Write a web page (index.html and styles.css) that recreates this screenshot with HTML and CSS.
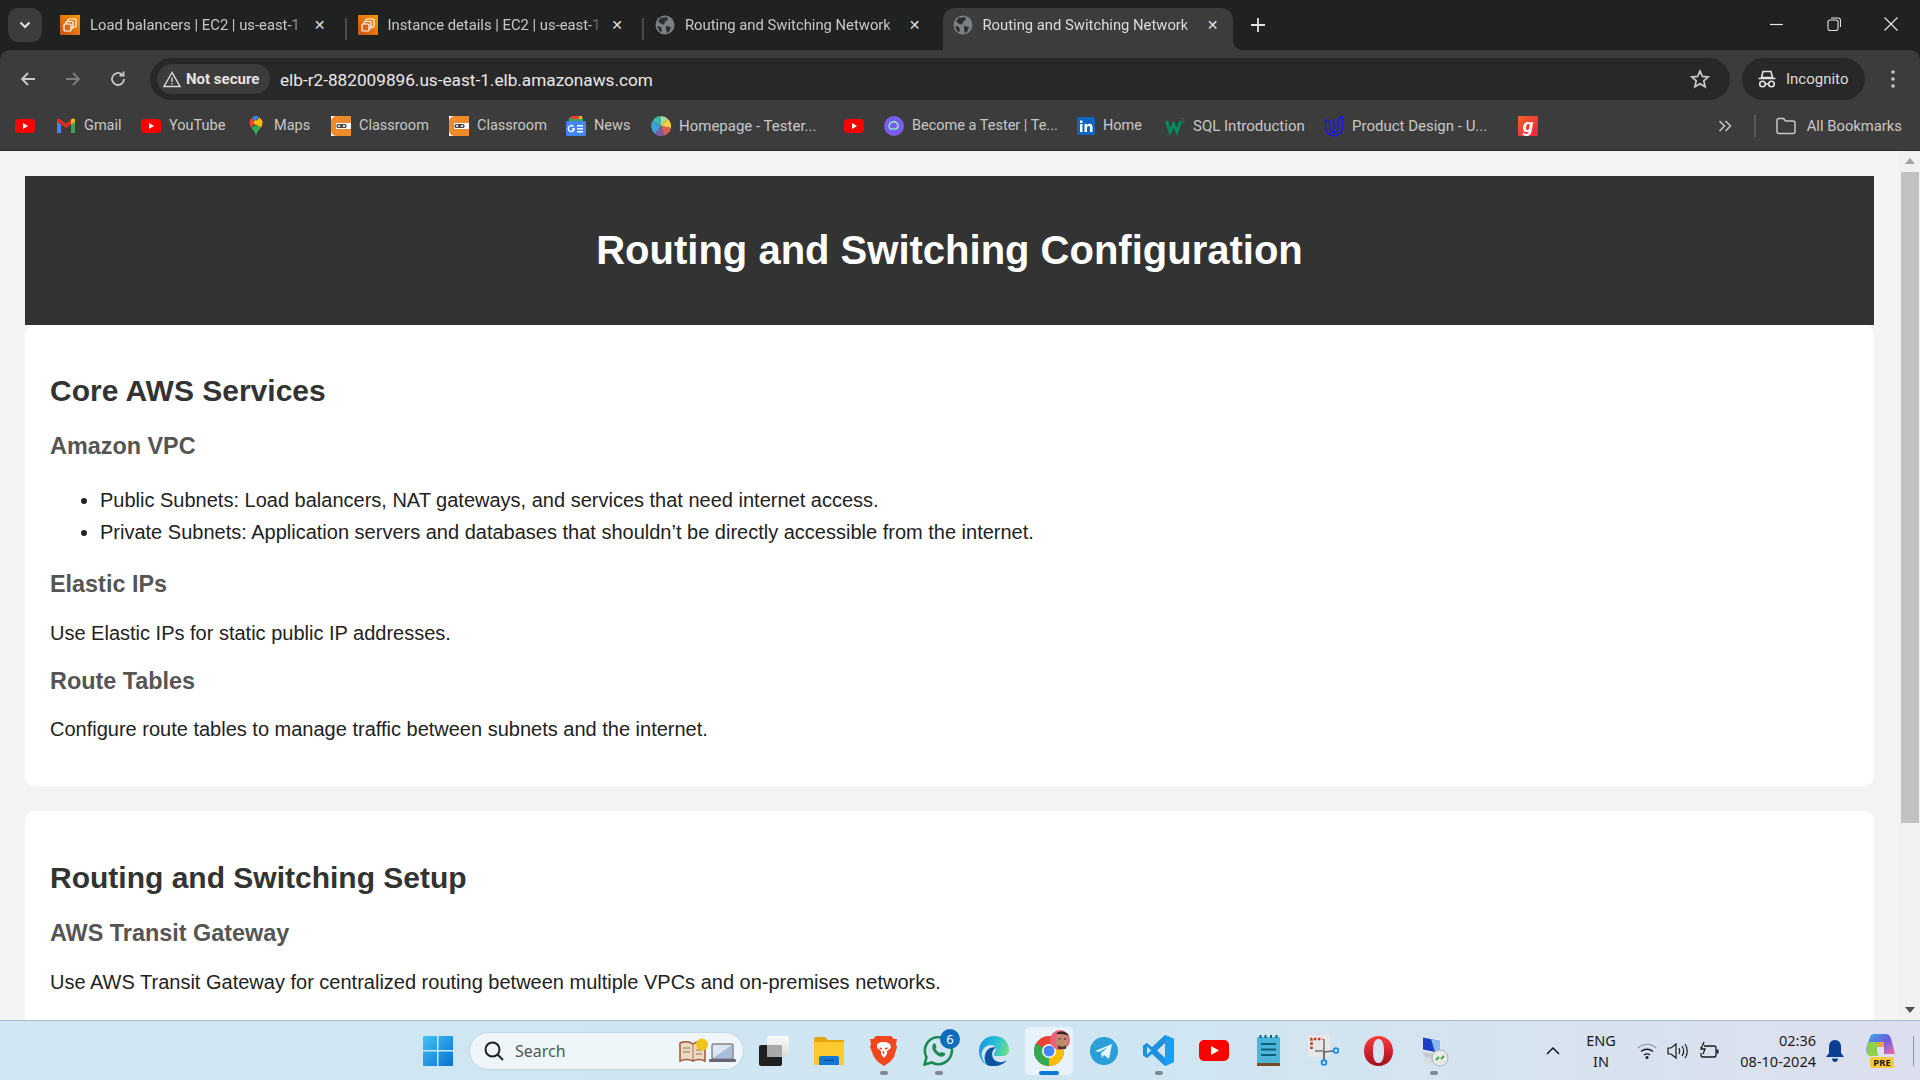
FILE: index.html
```html
<!DOCTYPE html>
<html lang="en">
<head>
  <meta charset="UTF-8" />
  <title>Routing and Switching Configuration</title>
  <link rel="stylesheet" href="styles.css">
</head>
<body>

<!-- shared icons -->
<svg class="defs" width="0" height="0">
  <symbol id="i-ec2" viewBox="0 0 20 20">
    <defs><linearGradient id="ec2g" x1="0" y1="1" x2="1" y2="0"><stop offset="0" stop-color="#c8511b"/><stop offset="1" stop-color="#f90"/></linearGradient></defs>
    <rect width="20" height="20" fill="url(#ec2g)"/>
    <rect x="8" y="4" width="8" height="8" rx="1" fill="none" stroke="#fff" stroke-width="1.2"/>
    <rect x="6" y="6.500" width="7" height="7" rx="1" fill="#d9701a" stroke="#fff" stroke-width="1.200"/>
    <rect x="4" y="9" width="7" height="7" rx="1" fill="#d9661a" stroke="#fff" stroke-width="1.200"/>
  </symbol>
  <symbol id="i-globe" viewBox="0 0 20 20">
    <circle cx="10" cy="10" r="9.500" fill="#7b7f82"/>
    <path d="M6 2.500c2 .5 4 0 6-.8l1 3-3 2-1 3-3-1-3-2.500zM11 11l5 1-2 5-2 1-1-4zM2 11l4 1 1 4-2 1z" fill="#2a2c2d"/>
  </symbol>
  <symbol id="i-yt" viewBox="0 0 20 20">
    <rect y="3" width="20" height="14" rx="4" fill="#f00"/>
    <path d="M8 7l5 3-5 3z" fill="#fff"/>
  </symbol>
  <symbol id="i-class" viewBox="0 0 20 20">
    <rect width="20" height="20" fill="#fff"/>
    <path d="M20 0H6C2.500 0 0 2.500 0 6v8c0 3.500 2.500 6 6 6h14v-3H7c-1 0-2-1-2-2V5c0-1 1-2 2-2h13z" fill="#ef8a28"/>
    <path d="M5 5c0-1 1-2 2-2h13v4H5zM5 13h15v4H7c-1 0-2-1-2-2z" fill="#ef8a28"/>
    <rect x="5" y="7" width="15" height="6" fill="#fff"/>
    <rect x="5.500" y="8" width="10" height="4" rx="1.500" fill="#4a4a4a"/>
    <circle cx="8" cy="10" r="1.100" fill="#fff"/><circle cx="13" cy="10" r="1.100" fill="#fff"/>
  </symbol>
</svg>

<div class="tabstrip">
  <button class="tab-search">
    <svg width="12" height="8" viewBox="0 0 12 8"><path d="M1.500 1.500L6 6l4.500-4.500" fill="none" stroke="#e3e3e3" stroke-width="2"/></svg>
  </button>
  <div class="tab">
    <svg class="fav" width="20" height="20"><use href="#i-ec2"/></svg>
    <span class="tab-title">Load balancers | EC2 | us-east-1</span>
    <span class="tab-x">&#x2715;</span>
  </div>
  <div class="tab">
    <svg class="fav" width="20" height="20"><use href="#i-ec2"/></svg>
    <span class="tab-title">Instance details | EC2 | us-east-1</span>
    <span class="tab-x">&#x2715;</span>
  </div>
  <div class="tab">
    <svg class="fav" width="20" height="20"><use href="#i-globe"/></svg>
    <span class="tab-title">Routing and Switching Network</span>
    <span class="tab-x">&#x2715;</span>
  </div>
  <div class="tab active">
    <svg class="fav" width="20" height="20"><use href="#i-globe"/></svg>
    <span class="tab-title">Routing and Switching Network</span>
    <span class="tab-x">&#x2715;</span>
  </div>
  <svg class="new-tab" width="16" height="16" viewBox="0 0 16 16"><path d="M8 1v14M1 8h14" stroke="#e3e3e3" stroke-width="1.800"/></svg>
  <div class="win-btns">
    <svg width="14" height="14" viewBox="0 0 14 14"><path d="M0 7.500h13" stroke="#e6e6e6" stroke-width="1.200"/></svg>
    <svg width="14" height="14" viewBox="0 0 14 14"><rect x="1" y="3" width="10" height="10.500" rx="2" fill="none" stroke="#e6e6e6" stroke-width="1.100"/><path d="M4 1h7c1.500 0 2.500 1 2.500 2.500V10" fill="none" stroke="#e6e6e6" stroke-width="1.100"/></svg>
    <svg width="14" height="14" viewBox="0 0 14 14"><path d="M.5.500l13 13M13.500.500l-13 13" stroke="#e6e6e6" stroke-width="1.200"/></svg>
  </div>
</div>

<div class="toolbar">
  <div class="nav">
    <svg width="18" height="18" viewBox="0 0 18 18"><path d="M16 9H3M9 3L3 9l6 6" fill="none" stroke="#c8c8c8" stroke-width="1.800"/></svg>
    <svg width="18" height="18" viewBox="0 0 18 18"><path d="M2 9h13M9 3l6 6-6 6" fill="none" stroke="#7d7d7d" stroke-width="1.800"/></svg>
    <svg width="18" height="18" viewBox="0 0 18 18"><path d="M15 9a6 6 0 1 1-2-4.500M14.500 1.500v4h-4" fill="none" stroke="#c8c8c8" stroke-width="1.800"/></svg>
  </div>
  <div class="omnibox">
    <div class="chip">
      <svg width="18" height="17" viewBox="0 0 18 17"><path d="M9 1.500L1 15.500h16z" fill="none" stroke="#d8d8d8" stroke-width="1.400"/><path d="M9 6.500v4.500M9 12v1.500" stroke="#d8d8d8" stroke-width="1.400"/></svg>
      <span>Not secure</span>
    </div>
    <span class="url">elb-r2-882009896.us-east-1.elb.amazonaws.com</span>
    <svg class="star" width="20" height="20" viewBox="0 0 20 20"><path d="M10 2l2.400 5.400 5.800.6-4.400 3.900 1.300 5.800L10 14.700l-5.100 3 1.300-5.800L1.800 8l5.800-.6z" fill="none" stroke="#c8c8c8" stroke-width="1.700"/></svg>
  </div>
  <div class="incognito">
    <svg width="20" height="20" viewBox="0 0 20 20"><path d="M6 2.500h8l1.500 6h-11zM1.500 9.500h17" fill="none" stroke="#e0e0e0" stroke-width="1.600"/><circle cx="5.500" cy="15" r="2.800" fill="none" stroke="#e0e0e0" stroke-width="1.600"/><circle cx="14.500" cy="15" r="2.800" fill="none" stroke="#e0e0e0" stroke-width="1.600"/><path d="M8.300 15h3.400" stroke="#e0e0e0" stroke-width="1.600"/></svg>
    <span>Incognito</span>
  </div>
  <svg class="kebab" width="6" height="20" viewBox="0 0 6 20"><circle cx="3" cy="3" r="1.800" fill="#c8c8c8"/><circle cx="3" cy="10" r="1.800" fill="#c8c8c8"/><circle cx="3" cy="17" r="1.800" fill="#c8c8c8"/></svg>
</div>

<div class="bookmarks">
  <a class="bm"><svg width="20" height="20"><use href="#i-yt"/></svg></a>
  <a class="bm">
    <svg width="20" height="20" viewBox="0 0 20 20"><path d="M1 17V5.500l4 3V17z" fill="#4285f4"/><path d="M15 17V8.500l4-3V17z" fill="#34a853"/><path d="M1 6V4c0-1.500 1.500-2 2.500-1.300L10 7.500l6.500-4.800L15 8.500 10 12 5 8.500z" fill="#d93025"/><path d="M15 8.500V3.500l1.500-.8C17.500 2 19 2.500 19 4v2z" fill="#fbbc04"/></svg>
    Gmail
  </a>
  <a class="bm"><svg width="20" height="20"><use href="#i-yt"/></svg> YouTube</a>
  <a class="bm">
    <svg width="20" height="20" viewBox="0 0 20 20"><path d="M5 11.500c2 2.500 4 4.500 5 8.500 1-4 3-6 5-8.500L10 9z" fill="#34a853"/><path d="M16.500 6.500c0 2-.7 3.500-1.500 5L9 8l4-6.500c2 1 3.500 2.700 3.500 5z" fill="#fbbc04"/><path d="M10 0c1 0 2 .3 3 .8L9.500 5 6 2 7 .8C8 .3 9 0 10 0z" fill="#4285f4"/><path d="M3.500 6.500C3.500 4.500 4.500 3 6 2l4 4.500L5 11.500C4 10 3.500 8.500 3.500 6.500z" fill="#ea4335"/><circle cx="10" cy="6.500" r="2.300" fill="#fbbc04"/></svg>
    Maps
  </a>
  <a class="bm"><svg width="20" height="20"><use href="#i-class"/></svg> Classroom</a>
  <a class="bm"><svg width="20" height="20"><use href="#i-class"/></svg> Classroom</a>
  <a class="bm">
    <svg width="20" height="20" viewBox="0 0 20 20"><path d="M3 1.500h14V6H3z" fill="#34a853"/><path d="M5 0h9v3H5z" fill="#ea4335"/><path d="M13 0h3v3h-3z" fill="#fbbc04"/><rect y="5" width="20" height="15" rx="1.500" fill="#4285f4"/><path d="M7.500 10.500a3 3 0 1 0 .8 2.500H6" fill="none" stroke="#fff" stroke-width="1.400"/><path d="M11 9h6v1.500h-6zM11 12h6v1.500h-6zM11 15h6v1.500h-6z" fill="#fff"/></svg>
    News
  </a>
  <a class="bm wide">
    <svg width="20" height="20" viewBox="0 0 20 20"><path d="M10 10V0a10 10 0 0 0-8.500 5z" fill="#3bb6a8"/><path d="M10 10V0a10 10 0 0 1 7 3z" fill="#a8d8a0"/><path d="M10 10l7-7a10 10 0 0 1 3 9z" fill="#f7d23e"/><path d="M10 10l10 2a10 10 0 0 1-7 7.500z" fill="#d9604f"/><path d="M10 10l3 9.500a10 10 0 0 1-9-1.500z" fill="#7d5aa8"/><path d="M10 10l-6 8a10 10 0 0 1-2.500-13z" fill="#3f9ed0"/></svg>
    Homepage - Tester...
  </a>
  <a class="bm"><svg width="20" height="20"><use href="#i-yt"/></svg></a>
  <a class="bm">
    <svg width="20" height="20" viewBox="0 0 20 20"><circle cx="10" cy="10" r="10" fill="#7b5cf0"/><path d="M6 13a4.500 4.500 0 1 1 8-2.500c0 1.500-1 2.500-3 2.500H6" fill="none" stroke="#7fe8c8" stroke-width="1.600"/></svg>
    Become a Tester | Te...
  </a>
  <a class="bm">
    <svg width="18" height="20" viewBox="0 0 18 20"><rect y="1" width="18" height="18" rx="1.500" fill="#0a66c2"/><path d="M3 8h2.500v8H3zM3 4.500h2.500V7H3zM7.500 8H10v1.200c.5-.8 1.500-1.400 2.700-1.400 2 0 2.800 1.300 2.800 3.400V16H13v-4.300c0-1-.3-1.700-1.300-1.700s-1.700.8-1.700 1.900V16H7.500z" fill="#fff"/></svg>
    Home
  </a>
  <a class="bm wide">
    <svg width="20" height="20" viewBox="0 0 20 20"><path d="M1.500 5l3.500 11 3.500-8 3.500 8L15.500 5" fill="none" stroke="#04895f" stroke-width="3"/><text x="16" y="7" class="sup">3</text></svg>
    SQL Introduction
  </a>
  <a class="bm wide">
    <svg width="20" height="22" viewBox="0 0 20 22"><path d="M1.500 4.500L6 7v7c0 2 1.500 3.500 4 4 2.500-.5 4-2 4-4V4l4.500-2.500V13c0 4-3.500 7-8.500 8-5-1-8.500-4-8.500-8z" fill="none" stroke="#1a1ae6" stroke-width="1.500"/><path d="M10 4v14" stroke="#1a1ae6" stroke-width="1.500"/></svg>
    Product Design - U...
  </a>
  <a class="bm bm-g">g</a>
  <svg class="more" width="14" height="12" viewBox="0 0 14 12"><path d="M1.500 1l5 5-5 5M7.500 1l5 5-5 5" fill="none" stroke="#c8c8c8" stroke-width="1.500"/></svg>
  <span class="bm-sep"></span>
  <a class="bm all">
    <svg width="20" height="18" viewBox="0 0 20 18"><path d="M1 3.500C1 2 2 1.500 3 1.500h4.500l2 2.500H17c1 0 2 .5 2 2v8.500c0 1.500-1 2-2 2H3c-1 0-2-.5-2-2z" fill="none" stroke="#c8c8c8" stroke-width="1.500"/></svg>
    All Bookmarks
  </a>
</div>

<div class="viewport">
  <div class="page">
    <header class="site-head">
      <h1>Routing and Switching Configuration</h1>
    </header>
    <section class="card">
      <h2>Core AWS Services</h2>
      <h3>Amazon VPC</h3>
      <ul>
        <li>Public Subnets: Load balancers, NAT gateways, and services that need internet access.</li>
        <li>Private Subnets: Application servers and databases that shouldn’t be directly accessible from the internet.</li>
      </ul>
      <h3>Elastic IPs</h3>
      <p>Use Elastic IPs for static public IP addresses.</p>
      <h3>Route Tables</h3>
      <p>Configure route tables to manage traffic between subnets and the internet.</p>
    </section>
    <section class="card">
      <h2>Routing and Switching Setup</h2>
      <h3>AWS Transit Gateway</h3>
      <p>Use AWS Transit Gateway for centralized routing between multiple VPCs and on-premises networks.</p>
    </section>
  </div>
  <div class="scrollbar">
    <span class="arrow up"></span>
    <div class="track"><div class="thumb"></div></div>
    <span class="arrow down"></span>
  </div>
</div>

<div class="taskbar">
  <div class="slot start">
    <svg width="30" height="30" viewBox="0 0 30 30"><defs><linearGradient id="wing" x1="0" y1="0" x2="1" y2="1"><stop offset="0" stop-color="#3fc4f5"/><stop offset="1" stop-color="#0b6fd0"/></linearGradient></defs><path d="M1 0h13v14H0V1q0-1 1-1zM15.500 0H29q1 0 1 1v13H15.500zM0 15.500h14V30H1q-1 0-1-1zM15.500 15.500H30V29q0 1-1 1H15.500z" fill="url(#wing)"/></svg>
  </div>
  <div class="search">
    <svg width="22" height="22" viewBox="0 0 22 22"><circle cx="9.500" cy="9.500" r="7" fill="none" stroke="#222" stroke-width="2"/><path d="M14.500 14.500L20 20" stroke="#222" stroke-width="2"/></svg>
    <span>Search</span>
    <svg class="search-art" width="58" height="26" viewBox="0 0 58 26"><path d="M1 5c5-2 9-2 13 1 4-3 8-3 12-1v18c-4-2-8-2-12 0-4-2-8-2-13 0z" fill="#e8d9c0" stroke="#a0563a" stroke-width="1.500"/><path d="M14 6v17M4 10h7M4 14h7M17 12h6M17 16h6" stroke="#a0563a" stroke-width=".8"/><circle cx="23" cy="6.500" r="6" fill="#f0c419"/><rect x="33" y="6" width="21" height="15" rx="1" fill="#dce6f4" stroke="#555"/><path d="M34 20l19-13v13z" fill="#a9bcd8"/><rect x="30" y="21" width="27" height="3" rx="1" fill="#667"/></svg>
  </div>
  <div class="slot">
    <svg width="30" height="30" viewBox="0 0 30 30"><defs><linearGradient id="tv" x1="0" y1="0" x2="0" y2="1"><stop offset="0" stop-color="#fafafa"/><stop offset="1" stop-color="#dcdcdc"/></linearGradient></defs><rect x="0" y="9" width="23" height="21" rx="2" fill="#1f1f1f"/><rect x="8" y="0" width="22" height="21" rx="2" fill="url(#tv)"/><rect x="8" y="9" width="15" height="12" rx="1" fill="#a8a8a8"/></svg>
  </div>
  <div class="slot">
    <svg width="30" height="28" viewBox="0 0 30 28"><path d="M0 2q0-2 2-2h9l3 3h16v5H0z" fill="#e5a50e"/><path d="M0 5h30v23H0z" fill="#fdc92f"/><path d="M5 21q0-2 2-2h16q2 0 2 2v7H5z" fill="#0f78d4"/><rect x="10" y="22.500" width="10" height="1.500" fill="#0a4f90"/></svg>
  </div>
  <div class="slot dot">
    <svg width="27" height="30" viewBox="0 0 27 30"><path d="M6 0h15l3 3 3 0-1 5 1 3-3 10-4 5-6 4-6-4-4-5L0 11l1-3L0 3l3 0z" fill="#f1471d"/><path d="M7 8l4-2h5l4 2 1 4-4 3v3l-3 4-3-4v-3l-4-3z" fill="#fff"/><path d="M9.500 12l2.500 1M17.500 12l-2.500 1M13.500 15v3" stroke="#f1471d" stroke-width="1.400"/></svg>
  </div>
  <div class="slot dot">
    <svg width="31" height="30" viewBox="0 0 31 30"><path d="M1.500 28.500l2-7.500A13.500 13.500 0 1 1 9 26.500z" fill="none" stroke="#1e8a55" stroke-width="2.600"/><path d="M10 8c1-1 2-1 2.500 0l1 3-1 1.500c1 2 2.500 3.500 4.500 4.500l1.500-1 3 1c1 .5 1 1.500 0 2.500-2 2-5 1.500-8-1s-5-6-4-9z" fill="#1e8a55"/></svg>
    <span class="badge">6</span>
  </div>
  <div class="slot">
    <svg width="30" height="30" viewBox="0 0 30 30"><defs><linearGradient id="edge1" x1="0" y1=".2" x2="1" y2=".5"><stop offset="0" stop-color="#1598e0"/><stop offset=".55" stop-color="#2cc0d8"/><stop offset="1" stop-color="#6fe37c"/></linearGradient></defs><path d="M15 0c9 0 15 6 15 14 0 4-3 6-7 6H15c0-5 3-6 2-8-1-3-6-4-9-2-4 2-6 6-5 11 1 4 3 6 5 8C3 27 0 21 0 15 0 6 7 0 15 0z" fill="url(#edge1)"/><path d="M8 29c-4-5-3-14 3-17 3-1 6-1 6 0-3 1-5 5-3 10 2 4 8 6 14 2-3 4-8 6-13 6-3 0-5 0-7-1z" fill="#0c56a0"/></svg>
  </div>
  <div class="slot active-app">
    <svg width="30" height="30" viewBox="0 0 30 30"><circle cx="15" cy="15" r="15" fill="#ea4335"/><path d="M15 15L2 7.500A15 15 0 0 0 15 30z" fill="#34a853"/><path d="M15 15V30A15 15 0 0 0 28 7.500z" fill="#fbbc04"/><circle cx="15" cy="15" r="7" fill="#fff"/><circle cx="15" cy="15" r="5.500" fill="#4285f4"/></svg>
    <svg class="avatar" width="20" height="20" viewBox="0 0 20 20"><circle cx="10" cy="10" r="10" fill="#e8607a"/><ellipse cx="12" cy="11" rx="6" ry="8" fill="#c08a6c"/><path d="M6 4c3-4 11-3 13 2-3-2-9-2-13-2z" fill="#2e2320"/><path d="M8 15c2 2 6 2 8 0v4H8z" fill="#4a3a35"/><path d="M8.500 9h2M14 9h2" stroke="#2e2320" stroke-width="1.200"/></svg>
  </div>
  <div class="slot">
    <svg width="28" height="28" viewBox="0 0 28 28"><circle cx="14" cy="14" r="14" fill="#2a9fd8"/><path d="M5 14l17-7-3 15-5-4-2 3-1-5 7-6-9 5z" fill="#e8f5fb"/></svg>
  </div>
  <div class="slot dot">
    <svg width="31" height="31" viewBox="0 0 31 31"><path d="M22 0l9 4v23l-9 4L9 19l-5 4-4-2.500v-10L4 8l5 4z" fill="#1f8fe0"/><path d="M22 0l9 4v23l-9 4z" fill="#15a0f5"/><path d="M22 8l-8 7.500 8 7.500z" fill="#cfe6f2"/><path d="M4 11.500v8l4-4z" fill="#cfe6f2"/></svg>
  </div>
  <div class="slot">
    <svg width="30" height="21" viewBox="0 0 30 21"><rect width="30" height="21" rx="5" fill="#f00"/><path d="M12 6l8 4.500-8 4.500z" fill="#fff"/></svg>
  </div>
  <div class="slot">
    <svg width="23" height="31" viewBox="0 0 23 31"><rect y="2" width="23" height="26" rx="1" fill="#4db6d8"/><path d="M0 28h23v3H0z" fill="#7a4a2a"/><path d="M3.500 0v3M8.500 0v3M14 0v3M19.500 0v3" stroke="#0d5e7e" stroke-width="2"/><path d="M4 9h15M4 14.500h15M4 20h15" stroke="#0d5e7e" stroke-width="2"/></svg>
  </div>
  <div class="slot">
    <svg width="31" height="31" viewBox="0 0 31 31"><rect width="22" height="22" rx="2" fill="#e8e8e8"/><path d="M3.500 14V4h11" fill="none" stroke="#c83a20" stroke-width="2.600" stroke-dasharray="2.600 1.500"/><path d="M16 4v19M16 16l-9 0" stroke="#777" stroke-width="1.600"/><path d="M16 17L25 16M16 17v8" stroke="#666" stroke-width="1.600"/><circle cx="16" cy="27.500" r="2.400" fill="none" stroke="#1b8be0" stroke-width="1.800"/><circle cx="28" cy="15.500" r="2.400" fill="none" stroke="#1b8be0" stroke-width="1.800"/></svg>
  </div>
  <div class="slot">
    <svg width="29" height="30" viewBox="0 0 29 30"><defs><linearGradient id="op" x1="0" y1="0" x2="0" y2="1"><stop offset="0" stop-color="#ff3b3b"/><stop offset="1" stop-color="#a30f1f"/></linearGradient></defs><path fill-rule="evenodd" d="M14.500 0C23 0 29 6.500 29 15s-6 15-14.500 15S0 23.500 0 15 6 0 14.500 0zM14.500 3C10 3 9 9 9 15s1 12 5.500 12S20 21 20 15 19 3 14.500 3z" fill="url(#op)"/></svg>
  </div>
  <div class="slot dot">
    <svg width="30" height="32" viewBox="0 0 30 32"><path d="M2 0l21 4v16L2 16z" fill="#dfe4ea"/><path d="M4 2.500l17 3.500v12L4 14.500z" fill="#1c3fc8"/><path d="M12 4l9 2v12l-5-1z" fill="#8ab8f0"/><path d="M3 17l16 3v4l-13-2z" fill="#c4cad2"/><ellipse cx="10" cy="26" rx="6" ry="3" fill="#d8dde2"/><circle cx="21" cy="23" r="8" fill="#e8e8e8" stroke="#9aa" stroke-width=".8"/><path d="M17 25l3-3M25 21l-3 3" stroke="#3aa53a" stroke-width="1.800"/></svg>
  </div>

  <div class="tray">
    <svg class="caret" width="14" height="8" viewBox="0 0 14 8"><path d="M1 7l6-6 6 6" fill="none" stroke="#1a1a1a" stroke-width="1.500"/></svg>
    <div class="lang"><span>ENG</span><span>IN</span></div>
    <div class="sys">
      <svg width="20" height="18" viewBox="0 0 20 18"><path d="M1 6c5-5 13-5 18 0" fill="none" stroke="#8a9298" stroke-width="1.200"/><path d="M4 9.500c3.500-3 8.500-3 12 0M7 13c1.500-1.500 4.500-1.500 6 0" fill="none" stroke="#1a1a1a" stroke-width="1.300"/><circle cx="10" cy="15.500" r="1.500" fill="#1a1a1a"/></svg>
      <svg width="21" height="18" viewBox="0 0 21 18"><path d="M1 6h3l5-4v14l-5-4H1z" fill="none" stroke="#1a1a1a" stroke-width="1.200"/><path d="M12 6c1 2 1 4 0 6M15 4c2 3 2 7 0 10M18 2c3 4 3 10 0 14" fill="none" stroke="#1a1a1a" stroke-width="1.200"/></svg>
      <svg width="22" height="20" viewBox="0 0 22 20"><path d="M6 5h10q2 0 2 2v7q0 2-2 2H5q-2 0-2-2v-2M3 7V6" fill="none" stroke="#1a1a1a" stroke-width="1.300"/><rect x="18.500" y="8.500" width="2" height="4" fill="#1a1a1a"/><path d="M6 1L3 8h4l-2 5" fill="none" stroke="#1a1a1a" stroke-width="1.300"/></svg>
    </div>
    <div class="clock"><span>02:36</span><span>08-10-2024</span></div>
    <svg class="bell" width="18" height="22" viewBox="0 0 18 22"><path d="M9 0c4 0 6 3 6 7v6l3 4H0l3-4V7c0-4 2-7 6-7z" fill="#0b3d91"/><path d="M6 18.500h6c0 2-1.500 3.500-3 3.500s-3-1.500-3-3.500z" fill="#0b3d91"/></svg>
    <div class="copilot">
      <svg width="29" height="25" viewBox="0 0 29 25"><defs><linearGradient id="cop" x1="0" y1="0" x2="1" y2="1"><stop offset="0" stop-color="#2fb6e8"/><stop offset=".5" stop-color="#6c5ce0"/><stop offset="1" stop-color="#f06fa8"/></linearGradient></defs><path d="M8 0h12c3 0 5 3 6 8l3 12H18V8H11v12H3C0 20 0 16 1 12L4 3c.5-2 2-3 4-3z" fill="url(#cop)"/><path d="M3 8c-3 5-3 14 1 14h9c-2-1-2-6-2-9V8z" fill="#8ed04c"/><path d="M11 8h7v5h-7z" fill="#f0a040"/></svg>
      <span class="pre">PRE</span>
    </div>
    <span class="tray-sep"></span>
  </div>
</div>

</body>
</html>
```

FILE: styles.css
```css
* { box-sizing: border-box; margin: 0; padding: 0; }
html, body { height: 100%; }
body {
  width: 1920px;
  height: 1080px;
  overflow: hidden;
  display: flex;
  flex-direction: column;
  background: #202221;
  font-family: Roboto, "Liberation Sans", sans-serif;
}
.defs { position: absolute; }

/* tab strip */
.tabstrip {
  height: 50px;
  display: flex;
  align-items: flex-end;
  padding-left: 8px;
  background: #202221;
  flex: none;
}
.tab-search {
  width: 34px;
  height: 34px;
  margin-bottom: 8px;
  margin-right: 9px;
  border: 0;
  border-radius: 10px;
  background: #3c3c3c;
  display: flex;
  align-items: center;
  justify-content: center;
}
.tab {
  position: relative;
  width: 297.500px;
  height: 42px;
  display: flex;
  align-items: center;
  padding: 0 19px 8px 9px;
  color: #c8c8c8;
  font-size: 14.800px;
}
.tab + .tab::before {
  content: "";
  position: absolute;
  left: -4px;
  top: 10px;
  height: 22px;
  width: 2px;
  background: #4a4a4a;
}
.tab.active::before { display: none; }
.fav { flex: none; margin-right: 10px; }
.tab-title {
  flex: none;
  width: 214px;
  white-space: nowrap;
  overflow: hidden;
  -webkit-mask-image: linear-gradient(to right, #000 94%, transparent);
  mask-image: linear-gradient(to right, #000 94%, transparent);
}
.tab-x {
  flex: none;
  width: 20px;
  margin-left: auto;
  font-size: 14px;
  color: #e0e0e0;
  text-align: center;
  font-family: "DejaVu Sans", sans-serif;
}
.tab.active {
  width: 290px;
  margin-left: -1px;
  padding-left: 10px;
  padding-right: 10px;
  background: #3c3c3c;
  border-radius: 12px 12px 0 0;
  color: #dcdcdc;
}
.tab.active::after {
  content: "";
  position: absolute;
  right: -10px;
  bottom: 0;
  width: 10px;
  height: 10px;
  background: radial-gradient(circle at 100% 0, transparent 10px, #3c3c3c 10.500px);
}
.new-tab { margin: 0 0 17px 17px; }
.win-btns {
  margin-left: auto;
  display: flex;
  gap: 43px;
  padding-right: 22px;
  height: 50px;
  align-items: center;
  padding-bottom: 2px;
}

/* toolbar */
.toolbar {
  height: 50px;
  flex: none;
  display: flex;
  align-items: flex-end;
  background: #3c3c3c;
  border-radius: 10px 10px 0 0;
}
.nav {
  width: 150px;
  height: 42px;
  display: flex;
  align-items: center;
  padding-left: 19px;
  gap: 27px;
}
.omnibox {
  width: 1580px;
  height: 42px;
  background: #282828;
  border-radius: 21px;
  display: flex;
  align-items: center;
  padding-left: 7px;
  padding-right: 20px;
}
.chip {
  width: 113px;
  height: 30px;
  border-radius: 15px;
  background: #3c3c3c;
  display: flex;
  align-items: center;
  gap: 5px;
  padding-left: 6px;
  color: #e3e3e3;
  font-size: 15px;
  font-weight: 700;
  white-space: nowrap;
}
.url {
  margin: 2px 0 0 10px;
  color: #e8e8e8;
  font-size: 17.200px;
}
.star { margin-left: auto; }
.incognito {
  width: 123px;
  height: 42px;
  margin-left: 12px;
  background: #282828;
  border-radius: 21px;
  display: flex;
  align-items: center;
  gap: 9px;
  padding-left: 15px;
  color: #dcdcdc;
  font-size: 15px;
}
.kebab { margin: 0 0 11px 25px; }

/* bookmarks */
.bookmarks {
  height: 51px;
  flex: none;
  display: flex;
  align-items: center;
  padding: 1px 18px 0 15px;
  background: #3c3c3c;
  border-bottom: 1px solid #2a2a2a;
  color: #c8c8c8;
  font-size: 14.500px;
  line-height: 22px;
}
.bm {
  flex: none;
  display: flex;
  align-items: center;
  gap: 8px;
  white-space: nowrap;
}
.wide { font-size: 15px; }
.all { gap: 11px; font-size: 14.800px; }
.bm:nth-child(1) { width: 41px; }
.bm:nth-child(2) { width: 85px; }
.bm:nth-child(3) { width: 105px; }
.bm:nth-child(4) { width: 85px; }
.bm:nth-child(5) { width: 118px; }
.bm:nth-child(6) { width: 117px; }
.bm:nth-child(7) { width: 85px; }
.bm:nth-child(8) { width: 193px; }
.bm:nth-child(9) { width: 40px; }
.bm:nth-child(10) { width: 193px; }
.bm:nth-child(11) { width: 88px; }
.bm:nth-child(12) { width: 159px; }
.bm:nth-child(13) { width: 194px; }
.bm-g {
  width: 20px;
  height: 20px;
  background: linear-gradient(135deg, #f0641e, #e81e50);
  color: #fff;
  font-size: 19px;
  font-weight: 700;
  font-style: italic;
  justify-content: center;
  line-height: 1;
}
.sup { font-size: 7px; fill: #04895f; font-family: "Liberation Sans", sans-serif; }
.more { margin-left: auto; }
.bm-sep {
  width: 2px;
  height: 22px;
  margin: 0 20px 0 22px;
  background: #5a5a5a;
}

/* page */
.viewport {
  flex: 1;
  min-height: 0;
  display: flex;
  background: #f4f4f4;
}
.page {
  flex: 1;
  min-width: 0;
  overflow: hidden;
  padding: 25px 25px 0 25px;
  color: #222;
  font-family: "Liberation Sans", Arial, sans-serif;
  font-size: 20px;
  line-height: 32px;
}
.site-head {
  height: 149px;
  padding-bottom: 2px;
  display: flex;
  align-items: center;
  justify-content: center;
  background: #333;
  color: #fff;
}
h1 { font-size: 40px; line-height: 64px; }
.card {
  background: #fff;
  border-radius: 10px;
  padding: 42px 25px 41px;
  margin-bottom: 25px;
}
.card + .card { padding-top: 43px; }
h2 { font-size: 30px; line-height: 48px; color: #333; margin-bottom: 13px; }
h3 { font-size: 23.400px; line-height: 37px; color: #555; margin-bottom: 13.500px; }
ul { padding-left: 50px; margin-bottom: 18px; margin-top: 19px; }
p + h3 { margin-top: 14px; }

.scrollbar {
  width: 21px;
  flex: none;
  display: flex;
  flex-direction: column;
  background: #f1f1f1;
}
.track { flex: 1; padding: 0 1px 0 2px; }
.thumb { height: 651px; margin-top: 1px; background: #c1c1c1; }
.arrow { height: 20px; display: flex; align-items: center; justify-content: center; }
.arrow::before {
  content: "";
  border-left: 5px solid transparent;
  border-right: 5px solid transparent;
}
.up::before { border-bottom: 6px solid #a3a3a3; }
.down::before { border-top: 6px solid #505050; }

/* taskbar */
.taskbar {
  height: 60px;
  flex: none;
  display: flex;
  align-items: center;
  padding-left: 410px;
  background: linear-gradient(90deg, #cfe7f3 0%, #cfe6f2 60%, #d8e2ef 85%, #dcdfee 100%);
  border-top: 1px solid #a9bccb;
  font-family: "Noto Sans", sans-serif;
  color: #1a1a1a;
}
.slot {
  position: relative;
  width: 55px;
  height: 50px;
  flex: none;
  display: flex;
  align-items: center;
  justify-content: center;
}
.start { margin-right: 4px; }
.search {
  width: 275px;
  height: 38px;
  margin-right: 2px;
  flex: none;
  display: flex;
  align-items: center;
  padding: 0 6px 0 13px;
  gap: 10px;
  background: #eff6fa;
  border: 1px solid #c4d6e0;
  border-radius: 19px;
  color: #555;
  font-size: 16px;
}
.search-art { margin-left: auto; }
.dot::after {
  content: "";
  position: absolute;
  bottom: 1px;
  left: 50%;
  width: 8px;
  height: 4px;
  margin-left: -4px;
  border-radius: 2px;
  background: #7e8a91;
}
.badge {
  position: absolute;
  top: 3px;
  right: 6px;
  width: 20px;
  height: 20px;
  border-radius: 50%;
  background: #0f6cbd;
  color: #fff;
  font-size: 13px;
  line-height: 20px;
  text-align: center;
}
.active-app {
  width: 48px;
  height: 48px;
  margin: 0 3.500px;
  background: rgba(255,255,255,.5);
  border-radius: 5px;
}
.active-app::after {
  content: "";
  position: absolute;
  bottom: 0;
  left: 50%;
  width: 20px;
  height: 4px;
  margin-left: -10px;
  border-radius: 2px;
  background: #0f78d4;
}
.avatar { position: absolute; top: 3px; left: 25px; }
.tray {
  margin-left: auto;
  display: flex;
  align-items: center;
  height: 100%;
  padding-right: 6px;
}
.caret { margin-right: 27px; }
.lang, .clock {
  display: flex;
  flex-direction: column;
  font-size: 14.500px;
  line-height: 21px;
}
.lang { align-items: center; width: 28px; margin-right: 22px; }
.sys { display: flex; align-items: center; gap: 10px; }
.clock { align-items: flex-end; width: 96px; }
.bell { margin-left: 10px; }
.copilot { position: relative; width: 29px; height: 34px; margin-left: 22px; }
.pre {
  position: absolute;
  left: 4px;
  bottom: 0;
  width: 24px;
  height: 11px;
  background: #ffc83d;
  border-radius: 2px;
  font-size: 9.500px;
  font-weight: 700;
  line-height: 11px;
  text-align: center;
}
.tray-sep { width: 1px; height: 30px; margin-left: 18px; background: #8a9aa5; }
```
